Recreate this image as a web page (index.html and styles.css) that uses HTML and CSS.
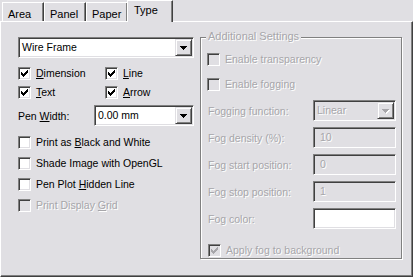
FILE: index.html
```html
<!DOCTYPE html>
<html lang="en">
<head>
    <meta charset="UTF-8">
    <title>Type</title>
    <link rel="stylesheet" href="styles.css">
</head>
<body>

<div class="dialog">
    <!-- Tab strip -->
    <div class="tabs">
        <div class="tab">Area</div>
        <div class="tab">Panel</div>
        <div class="tab">Paper</div>
        <div class="tab active">Type</div>
    </div>

    <div class="page">
        <!-- Left column -->
        <div class="main">
            <div class="combo wide">
                <span class="value">Wire Frame</span>
                <span class="drop"><svg width="7" height="4" viewBox="0 0 7 4"><path d="M0 0h7v1h-1v1h-1v1h-1v1h-1v-1h-1v-1h-1v-1h-1z"/></svg></span>
            </div>

            <div class="checks">
                <div class="check"><span class="box"><svg width="7" height="7" viewBox="0 0 7 7"><path d="M0 2h1v1h1v1h1v-1h1v-1h1v-1h1v-1h1v3h-1v1h-1v1h-1v1h-1v1h-1v-1h-1v-1h-1v-1h-1z"/></svg></span><span><u>D</u>imension</span></div>
                <div class="check"><span class="box"><svg width="7" height="7" viewBox="0 0 7 7"><path d="M0 2h1v1h1v1h1v-1h1v-1h1v-1h1v-1h1v3h-1v1h-1v1h-1v1h-1v1h-1v-1h-1v-1h-1v-1h-1z"/></svg></span><span><u>L</u>ine</span></div>
                <div class="check"><span class="box"><svg width="7" height="7" viewBox="0 0 7 7"><path d="M0 2h1v1h1v1h1v-1h1v-1h1v-1h1v-1h1v3h-1v1h-1v1h-1v1h-1v1h-1v-1h-1v-1h-1v-1h-1z"/></svg></span><span><u>T</u>ext</span></div>
                <div class="check"><span class="box"><svg width="7" height="7" viewBox="0 0 7 7"><path d="M0 2h1v1h1v1h1v-1h1v-1h1v-1h1v-1h1v3h-1v1h-1v1h-1v1h-1v1h-1v-1h-1v-1h-1v-1h-1z"/></svg></span><span><u>A</u>rrow</span></div>
            </div>

            <div class="pen">
                <span class="pen-label">Pen <u>W</u>idth:</span>
                <div class="combo narrow">
                    <span class="value">0.00 mm</span>
                    <span class="drop"><svg width="7" height="4" viewBox="0 0 7 4"><path d="M0 0h7v1h-1v1h-1v1h-1v1h-1v-1h-1v-1h-1v-1h-1z"/></svg></span>
                </div>
            </div>

            <div class="options">
                <div class="check"><span class="box"></span><span>Print as <u>B</u>lack and White</span></div>
                <div class="check"><span class="box"></span><span>Shade Image with OpenGL</span></div>
                <div class="check"><span class="box"></span><span>Pen Plot <u>H</u>idden Line</span></div>
                <div class="check off"><span class="box"></span><span>Print Display <u>G</u>rid</span></div>
            </div>
        </div>

        <!-- Additional settings group -->
        <div class="group">
            <span class="legend off">Additional Settings</span>

            <div class="check off"><span class="box"></span><span>Enable transparency</span></div>
            <div class="check off fog"><span class="box"></span><span>Enable fogging</span></div>

            <div class="fields off">
                <span>Fogging function:</span>
                <div class="combo">
                    <span class="value">Linear</span>
                    <span class="drop"><svg width="8" height="5" viewBox="0 0 8 5"><path d="M1 1h7v1h-1v1h-1v1h-1v1h-1v-1h-1v-1h-1v-1h-1z"/><path d="M0 0h7v1h-1v1h-1v1h-1v1h-1v-1h-1v-1h-1v-1h-1z"/></svg></span>
                </div>
                <span>Fog density (%):</span>
                <div class="field">10</div>
                <span>Fog start position:</span>
                <div class="field">0</div>
                <span>Fog stop position:</span>
                <div class="field">1</div>
                <span>Fog color:</span>
                <div class="field swatch"></div>
            </div>

            <div class="check off apply"><span class="box"><svg width="7" height="7" viewBox="0 0 7 7"><path d="M0 2h1v1h1v1h1v-1h1v-1h1v-1h1v-1h1v3h-1v1h-1v1h-1v1h-1v1h-1v-1h-1v-1h-1v-1h-1z"/></svg></span><span>Apply fog to background</span></div>
        </div>
    </div>
</div>

</body>
</html>
```

FILE: styles.css
```css
/* Classic dialog look */
body {
    margin: 0;
    background: #e0dfe3;
    font-family: "Liberation Sans", Arial, sans-serif;
    font-size: 10.5px;
    color: #000;
}

.dialog {
    width: 413px;
    height: 277px;
    display: flex;
    flex-direction: column;
}

/* Tabs */
.tabs {
    display: flex;
    align-items: flex-end;
    height: 21px;
    padding-left: 2px;
    position: relative;
    z-index: 1;
}

.tab {
    width: 42px;
    height: 19px;
    box-sizing: border-box;
    padding: 4px 0 0 5px;
    font-size: 11px;
    line-height: 14px;
    border-top: 1px solid #fff;
    border-left: 1px solid #fff;
    border-right: 1px solid #404040;
    box-shadow: inset -1px 0 #808080;
    background: #e0dfe3;
}

.tab.active {
    width: 46px;
    height: 22px;
    margin: 0 -2px -1px -1px;
    padding: 2px 0 0 6px;
}

/* Tab page */
.page {
    flex: 1;
    display: flex;
    align-items: flex-start;
    border-top: 1px solid #fff;
    border-left: 1px solid #fff;
    border-right: 1px solid #404040;
    border-bottom: 1px solid #404040;
    box-shadow: inset -1px -1px #808080;
}

.main {
    width: 199px;
    box-sizing: border-box;
    padding: 15px 0 0 17px;
}

/* Combo boxes and edit fields */
.combo, .field {
    height: 21px;
    box-sizing: border-box;
    display: flex;
    align-items: center;
    padding: 1px;
    border: 1px solid;
    border-color: #808080 #fff #fff #808080;
    box-shadow: inset 1px 1px #404040, inset -1px -1px #e0dfe3;
    background: #fff;
}

.combo.wide {
    width: 176px;
}

.combo.narrow {
    width: 100px;
}

.value {
    flex: 1;
    padding-left: 2px;
    line-height: 13px;
}

.drop {
    width: 17px;
    height: 17px;
    box-sizing: border-box;
    display: flex;
    align-items: center;
    justify-content: center;
    padding-top: 1px;
    background: #e0dfe3;
    border: 1px solid;
    border-color: #e0dfe3 #404040 #404040 #e0dfe3;
    box-shadow: inset 1px 1px #fff, inset -1px -1px #808080;
}

/* Check boxes */
.check {
    display: flex;
    align-items: center;
    gap: 5px;
    height: 13px;
    line-height: 13px;
    white-space: nowrap;
}

.box {
    width: 13px;
    height: 13px;
    flex: none;
    box-sizing: border-box;
    display: flex;
    align-items: center;
    justify-content: center;
    border: 1px solid;
    border-color: #808080 #fff #fff #808080;
    box-shadow: inset 1px 1px #404040, inset -1px -1px #e0dfe3;
    background: #fff;
}

.checks {
    display: grid;
    grid-template-columns: 87px auto;
    row-gap: 6px;
    margin-top: 9px;
}

.pen {
    display: flex;
    align-items: center;
    margin-top: 6px;
}

.pen-label {
    width: 76px;
}

.options {
    display: flex;
    flex-direction: column;
    gap: 8px;
    margin-top: 10px;
}

/* Disabled look */
.off {
    color: #a7a6aa;
    text-shadow: 1px 1px 0 #fff;
}

.off .box {
    background: #e0dfe3;
}

.off svg path {
    fill: #a7a6aa;
}

.off .drop svg path:first-child {
    fill: #fff;
}

/* Group box */
.group {
    position: relative;
    width: 202px;
    height: 222px;
    box-sizing: border-box;
    margin-top: 15px;
    padding: 15px 0 0 6px;
    border: 1px solid #808080;
    box-shadow: inset 1px 1px #fff, 1px 1px #fff;
}

.legend {
    position: absolute;
    top: -8px;
    left: 5px;
    padding: 0 2px;
    font-size: 11px;
    line-height: 13px;
    background: #e0dfe3;
}

.fog {
    margin-top: 12px;
}

.fields {
    display: grid;
    grid-template-columns: 105px 83px;
    row-gap: 6px;
    align-items: center;
    margin: 9px 0 0 1px;
}

.fields .combo, .field {
    background: #e0dfe3;
}

.field {
    padding-left: 6px;
    line-height: 13px;
}

.field.swatch {
    background: #fff;
}

.apply {
    margin: 15px 0 0 1px;
}
```
